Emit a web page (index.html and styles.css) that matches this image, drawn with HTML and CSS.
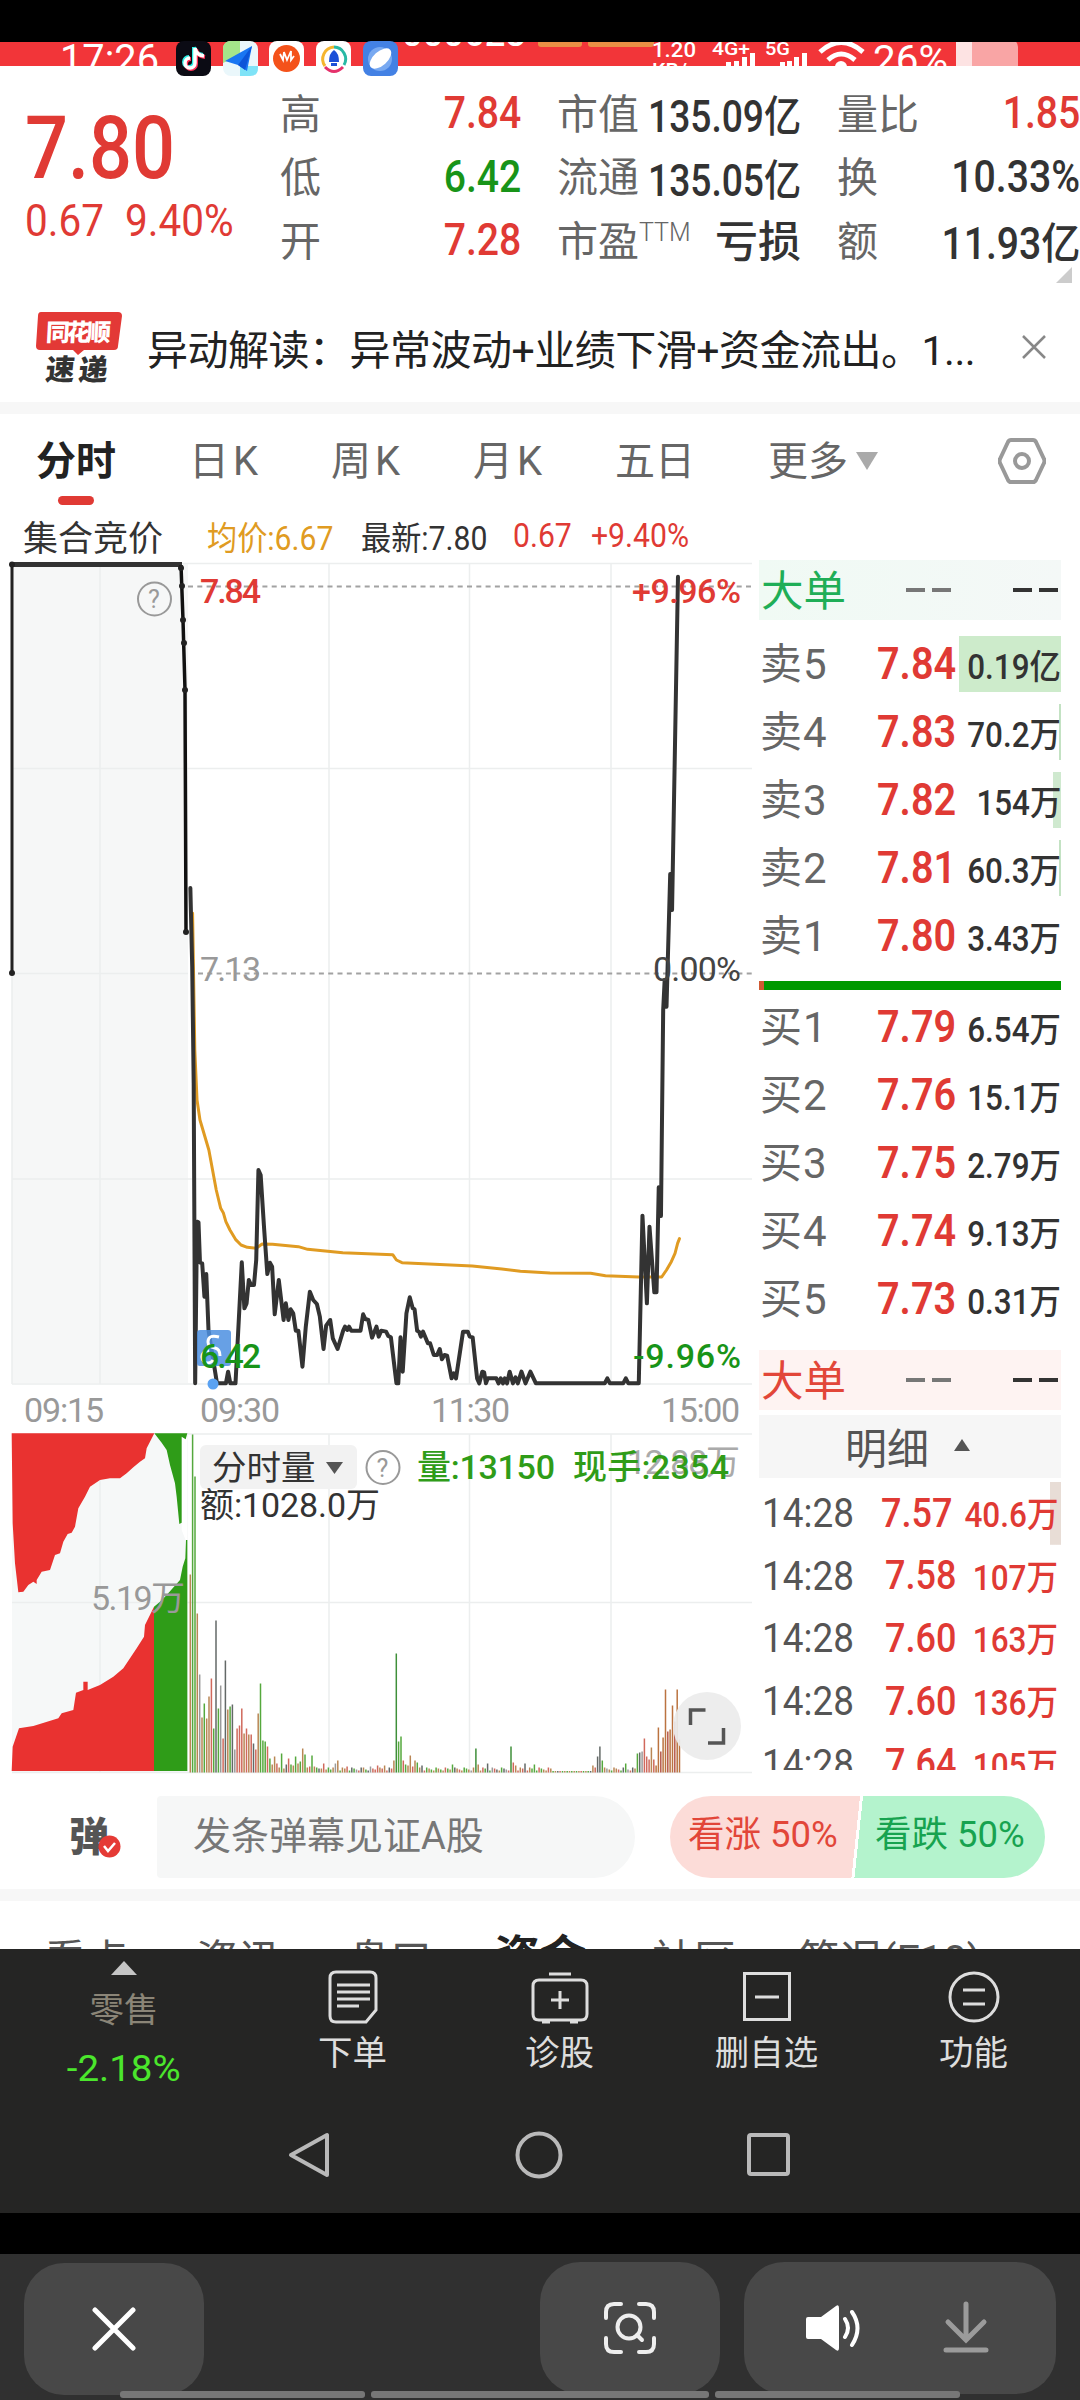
FILE: index.html
```
<!DOCTYPE html>
<html lang="zh-CN">
<head>
  <meta charset="UTF-8">
  <meta name="viewport" content="width=device-width, initial-scale=1.0">
  <title>分时</title>
  <link rel="stylesheet" href="styles.css">
</head>
<body>
  <div class="status">
    <svg width="1080" height="36" viewBox="0 41 1080 36">
      <rect x="0" y="42" width="1080" height="24" fill="#f23539"/>
      <g clip-path="url(#barClip)" fill="#fff" font-size="40">
        <text x="60" y="73" textLength="99" lengthAdjust="spacingAndGlyphs">17:26</text>
        <text x="402" y="46" font-size="36" font-weight="500" textLength="124" lengthAdjust="spacingAndGlyphs">000628</text>
        <rect x="538" y="38" width="44" height="9" rx="3" fill="#e98f45"/>
        <rect x="588" y="38" width="66" height="9" rx="3" fill="#e98f45"/>
        <text x="652" y="57" font-size="21" font-weight="500" textLength="44" lengthAdjust="spacingAndGlyphs">1.20</text>
        <text x="652" y="78" font-size="21" font-weight="500" textLength="46" lengthAdjust="spacingAndGlyphs">KB/s</text>
        <text x="712" y="55" font-size="19" font-weight="500" textLength="38" lengthAdjust="spacingAndGlyphs">4G+</text>
        <text x="765" y="55" font-size="19" font-weight="500" textLength="25" lengthAdjust="spacingAndGlyphs">5G</text>
        <path d="M726 66v-4h5v4zM734 66v-5h5v5zM742 66v-9h5v9zM750 66v-13h5v13zM780 66v-4h5v4zM787 66v-5h5v5zM794 66v-9h5v9zM802 66v-13h5v13z"/>
        <g fill="none" stroke="#fff" stroke-width="5">
          <path d="M820 52q21 -19 43 0"/>
          <path d="M828 60q13 -12 27 0"/>
        </g>
        <circle cx="841" cy="67" r="6"/>
        <text x="873" y="73" font-size="38" textLength="75" lengthAdjust="spacingAndGlyphs">26%</text>
        <rect x="956" y="39" width="62" height="34" rx="8" fill="#f9a5a5"/>
        <path d="M956 39h16v34h-16z" fill="#fde3e3"/>
      </g>
      <clipPath id="barClip"><rect x="0" y="42" width="1080" height="24"/></clipPath>
      <rect x="176" y="41" width="35" height="35" rx="8" fill="#0b0b14"/>
      <path d="M195 48v15a5 5 0 1 1-5-5M195 48q1 7 9 8" fill="none" stroke="#2ff0e8" stroke-width="4" transform="translate(-1 -1)"/>
      <path d="M195 48v15a5 5 0 1 1-5-5M195 48q1 7 9 8" fill="none" stroke="#fe3258" stroke-width="4" transform="translate(1 1)"/>
      <path d="M195 48v15a5 5 0 1 1-5-5M195 48q1 7 9 8" fill="none" stroke="#fff" stroke-width="3.500"/>
      <rect x="223" y="41" width="35" height="35" rx="8" fill="#eaf7fb"/>
      <path d="M223 49q0-8 8-8h9v14l-17 8z" fill="#a5e58a"/>
      <path d="M240 76v-10h18v2q0 8-8 8z" fill="#7fe3f7"/>
      <path d="M225 61l27-15-5 25-9-6z" fill="#1976f2"/>
      <path d="M238 65l14-19-7 24z" fill="#0c55d8"/>
      <rect x="269" y="41" width="35" height="35" rx="8" fill="#fff"/>
      <circle cx="286.500" cy="58.500" r="13.500" fill="#f4521a"/>
      <path d="M280 54l3 6 1-8 3 8 4-9 0 9 3-4" fill="none" stroke="#fff" stroke-width="1.800"/>
      <rect x="316" y="41" width="35" height="35" rx="8" fill="#fff"/>
      <g fill="none" stroke-width="3">
        <path d="M334 47a12 12 0 0 0-9 19" stroke="#f5b52e"/>
        <path d="M334 47a12 12 0 0 1 10 18" stroke="#28b9a5"/>
        <path d="M325 67q9 9 18 0" stroke="#e5316b"/>
      </g>
      <path d="M334 50q5 3 5 12h-10q0-9 5-12zM331 63h6v3h-6z" fill="#1c50d8"/>
      <rect x="363" y="41" width="35" height="35" rx="8" fill="#4381e4"/>
      <circle cx="380" cy="59" r="12" fill="#78a9f1"/>
      <ellipse cx="380.500" cy="58.500" rx="13" ry="7" fill="#fff" transform="rotate(-42 380.500 58.500)"/>
    </svg>
  </div>

  <div class="quote">
    <div class="price">
      <div class="last num">7.80</div>
      <div class="change"><span class="num">0.67</span><span class="num">9.40%</span></div>
    </div>
    <div class="stats">
      <div class="stat"><span>高</span><b class="num red">7.84</b></div>
      <div class="stat"><span>市值</span><b class="num cap">135.09亿</b></div>
      <div class="stat"><span>量比</span><b class="num red">1.85</b></div>
      <div class="stat"><span>低</span><b class="num green">6.42</b></div>
      <div class="stat"><span>流通</span><b class="num cap">135.05亿</b></div>
      <div class="stat"><span>换</span><b class="num">10.33%</b></div>
      <div class="stat"><span>开</span><b class="num red">7.28</b></div>
      <div class="stat"><span>市盈<sup>TTM</sup></span><b class="loss">亏损</b></div>
      <div class="stat"><span>额</span><b class="num">11.93亿</b></div>
    </div>
    <i class="corner"></i>
  </div>

  <div class="news">
    <svg class="news-logo" width="86" height="72" viewBox="0 0 86 72">
      <path d="M5 0h77q4 0 4 4l-4 30q0 4-4 4H48l-6 5-5-5H4q-4 0-4-4L2 4q0-4 3-4z" fill="#e33936"/>
      <text x="11" y="29" font-size="24" font-weight="900" fill="#fff" textLength="65" transform="skewX(-3)">同花顺</text>
      <text x="16" y="68" font-size="29" font-weight="900" fill="#333" textLength="62" transform="skewX(-6)">速递</text>
    </svg>
    <span class="news-text">异动解读：异常波动+业绩下滑+资金流出。1...</span>
    <svg width="24" height="24" viewBox="0 0 24 24"><path d="M1 1l22 22M23 1L1 23" stroke="#888" stroke-width="2.500"/></svg>
  </div>

  <div class="tabs">
    <span class="tab active">分时</span>
    <span class="tab">日<em>K</em></span>
    <span class="tab">周<em>K</em></span>
    <span class="tab">月<em>K</em></span>
    <span class="tab wide">五日</span>
    <span class="tab more">更多</span>
    <i class="caret"></i>
    <svg class="gear" width="48" height="46" viewBox="0 0 48 46"><path d="M13 2h22q2 0 3 2l8 17q1 2 0 4l-8 17q-1 2-3 2H13q-2 0-3-2L2 25q-1-2 0-4L10 4q1-2 3-2z" fill="none" stroke="#999" stroke-width="4"/><circle cx="24" cy="23" r="7" fill="none" stroke="#999" stroke-width="4"/></svg>
  </div>

  <div class="legend">
    <span class="legend-title">集合竞价</span>
    <span class="num avg">均价:6.67</span>
    <span class="num now">最新:7.80</span>
    <span class="num red diff">0.67</span>
    <span class="num red">+9.40%</span>
  </div>

  <div class="market">
    <svg class="chart" width="752" height="1214" viewBox="0 560 752 1214">
      <rect x="12" y="563" width="176" height="820" fill="#f6f7f7"/>
      <rect x="12" y="1434" width="176" height="338" fill="#f6f8f8"/>
      <g stroke="#eceeee" stroke-width="1.500">
        <path d="M12 563.500H752M12 768.500H752M12 973.500H188M12 1179H752M12 1384H752M12 1434H752M12 1602.500H752M12 1772.500H752"/>
        <path d="M100 563V1384M329 563V1384M469.500 563V1384M611 563V1384M100 1434V1772M329 1434V1772M469.500 1434V1772M611 1434V1772M12 974V1384"/>
      </g>
      <path d="M188 586.500H752M198 973.500H752" stroke="#a2a2a2" stroke-width="2" stroke-dasharray="5 4.300"/>

      <!-- call auction -->
      <path d="M12 973V565" stroke="#222" stroke-width="3"/>
      <path d="M12 564.500H182" stroke="#333" stroke-width="5"/>
      <path d="M181 565L183 620L185 690L186 932" fill="none" stroke="#111" stroke-width="3.500"/>
      <g fill="#222"><circle cx="12" cy="973" r="3"/><circle cx="12" cy="564.500" r="3"/><circle cx="181" cy="568" r="3"/><circle cx="182" cy="586" r="3"/><circle cx="183" cy="620" r="3"/><circle cx="184" cy="643" r="3"/><circle cx="185" cy="690" r="3"/><circle cx="186" cy="932" r="3"/></g>
      <circle cx="154.500" cy="599" r="16.500" fill="none" stroke="#999" stroke-width="2"/>
      <text x="148" y="608" font-size="25" fill="#999">?</text>

      <!-- average and price -->
      <g fill="none" stroke-linejoin="round" stroke-linecap="round" transform="translate(180 1100) scale(.36997 .33333)">
        <polyline class="line" stroke="#e09b22" points="34,-560 40,-150 46,0 54,60 78,150 98,270 110,325 117,338 124,365 135,390 150,418 165,435 182,442 206,445 222,432 250,433 320,440 345,448 440,458 575,464 585,480 600,488 790,498 870,507 920,514 1000,519 1110,520 1150,527 1240,531 1302,531 1315,510 1328,485 1338,460 1345,430 1350,416"/>
        <polyline class="line price-line" stroke="#333" points="28,-636 33,-400 37,-50 41,850 46,365 50,367 54,487 60,490 66,590 71,522 77,690 84,740 100,850 124,850 130,815 136,850 150,850 167,487 174,625 180,610 186,540 192,555 200,555 206,480 212,210 218,225 227,380 236,522 243,488 249,500 256,643 267,540 280,660 286,610 293,660 299,628 306,640 313,692 320,692 331,800 340,680 351,575 360,600 370,612 378,650 388,747 395,677 406,660 413,715 426,747 441,692 446,680 452,690 457,680 463,692 488,692 495,643 501,657 509,660 519,713 531,680 537,710 544,692 557,695 563,708 570,712 585,850 590,850 596,712 602,815 612,640 621,592 629,625 634,628 641,692 646,695 651,710 657,695 670,730 676,730 686,765 695,765 702,747 708,778 715,765 722,767 734,835 740,820 746,835 765,695 778,695 783,710 791,712 803,835 809,850 817,815 822,817 827,850 832,835 855,835 861,850 867,835 873,850 878,835 884,850 891,815 900,850 907,832 913,850 923,815 934,850 947,815 962,850 1148,850 1155,835 1162,850 1198,850 1205,835 1212,850 1240,850 1250,347 1262,610 1269,380 1282,577 1288,577 1294,262 1300,348 1306,-270 1310,-360 1315,-280 1325,-678 1330,-570 1346,-1570"/>
      </g>

      <rect x="197" y="1330" width="34" height="36" rx="3" fill="#4c8fe0" opacity=".85"/>
      <path d="M219 1337q-11-3-11 5 0 5 7 6 5 1 5 8M209 1351a6 6 0 1 0 4 9" fill="none" stroke="#fff" stroke-width="3"/>
      <circle cx="213" cy="1384" r="5.500" fill="#5aa2f2"/>

      <g class="axis" font-size="34" font-weight="500">
        <text x="200" y="603" textLength="61" fill="#e03a34">7.84</text>
        <text x="632" y="603" textLength="109" fill="#e03a34">+9.96%</text>
        <text x="200" y="981" textLength="61" fill="#999" font-weight="400">7.13</text>
        <text x="653" y="981" textLength="88" fill="#444" font-weight="400">0.00%</text>
        <text x="200" y="1368" textLength="61" fill="#189418">6.42</text>
        <text x="633" y="1368" textLength="108" fill="#189418">-9.96%</text>
      </g>
      <g class="axis" font-size="34" fill="#999">
        <text x="24" y="1422" textLength="80">09:15</text>
        <text x="200" y="1422" textLength="80">09:30</text>
        <text x="431" y="1422" textLength="79">11:30</text>
        <text x="661" y="1422" textLength="79">15:00</text>
      </g>

      <!-- auction volume -->
      <g transform="translate(0 1390) scale(.33333)">
        <path fill="#e93230" d="M35 130H463L440 175L435 205L420 215L400 232L380 250L360 265L330 265L300 270L270 290L255 320L235 355L225 410L215 428L203 432L190 455L180 490L165 495L150 540L125 545L110 570V582L100 575L85 585L70 605L55 607L45 520L38 400Z"/>
        <path fill="#fff" d="M545 140H562V450H557L545 420Z"/>
        <path fill="#2f9c18" d="M463 130H562L557 148L545 140V398L538 402L530 320L525 280L510 225L500 180L485 158Z"/>
        <path fill="#e93230" d="M35 1143L38 1070L57 1015L100 1008L175 985L185 970L220 960L228 908L250 900V875H263V900L300 885L340 860L370 835L410 775L432 740L435 705L462 650V1143Z"/>
        <path fill="#2f9c18" d="M462 650L480 635L500 615L540 570L548 530L556 505L558 450H562V1143H462Z"/>
      </g>
      <text class="axis" x="91" y="1610" font-size="34" fill="#999" textLength="94">5.19万</text>

      <g id="bars"></g>

      <rect x="200" y="1445" width="157" height="44" rx="6" fill="#f2f2f2"/>
      <text x="212" y="1480" font-size="34.500" fill="#333">分时量</text>
      <path d="M326 1462h17l-8.500 12z" fill="#555"/>
      <circle cx="383" cy="1467.500" r="16.500" fill="none" stroke="#999" stroke-width="2"/>
      <text x="376.500" y="1477" font-size="25" fill="#999">?</text>
      <g class="axis" font-size="34">
        <text x="627" y="1474" fill="#aaa" textLength="113">12.88万</text>
        <text x="417" y="1479" fill="#2f9c18" font-weight="500" textLength="138">量:13150</text>
        <text x="573" y="1479" fill="#2f9c18" font-weight="500" textLength="156">现手:2354</text>
        <text x="200" y="1517" fill="#333" textLength="180">额:1028.0万</text>
      </g>
      <circle cx="707" cy="1726" r="34" fill="#ebebeb" opacity=".92"/>
      <path d="M690.500 1725v-15h15M708 1743h15.500v-15" fill="none" stroke="#555" stroke-width="3.500"/>
    </svg>

    <div class="book">
      <div class="big sell"><span>大单</span><i></i><i class="dark"></i></div>
      <div class="levels">
        <div class="level"><span>卖<em>5</em></span><b class="num">7.84</b><u class="full"><s class="num">0.19亿</s></u></div>
        <div class="level"><span>卖<em>4</em></span><b class="num">7.83</b><u class="thin"><s class="num">70.2万</s></u></div>
        <div class="level"><span>卖<em>3</em></span><b class="num">7.82</b><u class="part"><s class="num">154万</s></u></div>
        <div class="level"><span>卖<em>2</em></span><b class="num">7.81</b><u class="thin"><s class="num">60.3万</s></u></div>
        <div class="level"><span>卖<em>1</em></span><b class="num">7.80</b><u><s class="num">3.43万</s></u></div>
      </div>
      <div class="ratio"></div>
      <div class="levels buy-levels">
        <div class="level"><span>买<em>1</em></span><b class="num">7.79</b><u><s class="num">6.54万</s></u></div>
        <div class="level"><span>买<em>2</em></span><b class="num">7.76</b><u><s class="num">15.1万</s></u></div>
        <div class="level"><span>买<em>3</em></span><b class="num">7.75</b><u><s class="num">2.79万</s></u></div>
        <div class="level"><span>买<em>4</em></span><b class="num">7.74</b><u><s class="num">9.13万</s></u></div>
        <div class="level"><span>买<em>5</em></span><b class="num">7.73</b><u><s class="num">0.31万</s></u></div>
      </div>
      <div class="big buy"><span>大单</span><i></i><i class="dark"></i></div>
      <div class="detail">明细<i></i></div>
      <div class="ticks">
        <div class="tick mark"><span class="num">14:28</span><b class="num">7.57</b><s class="num">40.6万</s></div>
        <div class="tick"><span class="num">14:28</span><b class="num">7.58</b><s class="num">107万</s></div>
        <div class="tick"><span class="num">14:28</span><b class="num">7.60</b><s class="num">163万</s></div>
        <div class="tick"><span class="num">14:28</span><b class="num">7.60</b><s class="num">136万</s></div>
        <div class="tick"><span class="num">14:28</span><b class="num">7.64</b><s class="num">105万</s></div>
      </div>
    </div>
  </div>

  <div class="danmu">
    <div class="danmu-icon">弹
      <svg width="23" height="23" viewBox="0 0 23 23"><circle cx="11.500" cy="11.500" r="11" fill="#e53a35"/><path d="M6 11l4 5 7-8" fill="none" stroke="#fff" stroke-width="2.500"/></svg>
    </div>
    <div class="danmu-input">发条弹幕见证A股</div>
    <div class="vote"><span class="up">看涨 50%</span><span class="down">看跌 50%</span></div>
  </div>

  <div class="sections">
    <span>看点</span><span>资讯</span><span>盘口</span><span class="on">资金</span><span>社区</span><span>简况(F10)</span>
  </div>

  <div class="actions">
    <div class="action index"><i></i><span>零售</span><b class="num">-2.18%</b></div>
    <div class="action">
      <svg width="50" height="56" viewBox="0 0 50 56"><path d="M8 3h34q6 0 6 6v32L38 53H8q-6 0-6-6V9q0-6 6-6zM9 16h33M9 23h33M9 30h33M9 37h22"/></svg>
      <span>下单</span>
    </div>
    <div class="action">
      <svg width="58" height="56" viewBox="0 0 58 56"><path d="M8 11h42q6 0 6 6v28q0 6-6 6H8q-6 0-6-6V17q0-6 6-6zM18 5h22M29 22v18M20 31h18M11 53h8M39 53h8"/></svg>
      <span>诊股</span>
    </div>
    <div class="action">
      <svg width="50" height="56" viewBox="0 0 50 56"><path d="M2.500 4.500h45v46h-45zM13 28h24"/></svg>
      <span>删自选</span>
    </div>
    <div class="action">
      <svg width="52" height="56" viewBox="0 0 52 56"><circle cx="26" cy="28" r="24"/><path d="M15 21h22M15 35h22"/></svg>
      <span>功能</span>
    </div>
  </div>
  <div class="nav">
    <svg width="44" height="48" viewBox="0 0 44 48"><path d="M40 4v40L4 24z"/></svg>
    <svg width="48" height="48" viewBox="0 0 48 48"><circle cx="24" cy="24" r="21.500"/></svg>
    <svg width="44" height="48" viewBox="0 0 44 48"><rect x="2" y="4" width="39" height="39" rx="2"/></svg>
  </div>

  <div class="viewer">
    <button class="vbtn"><svg width="44" height="44" viewBox="0 0 44 44"><path d="M3 3l38 38M41 3L3 41" stroke="#fff" stroke-width="5" stroke-linecap="round"/></svg></button>
    <button class="vbtn lens"><svg width="54" height="54" viewBox="0 0 54 54" fill="none" stroke="#eee" stroke-width="4" stroke-linecap="round"><path d="M3 17v-6q0-8 8-8h7M36 3h7q8 0 8 8v6M51 37v6q0 8-8 8h-7M18 51h-7q-8 0-8-8v-6"/><circle cx="26" cy="26" r="11.500"/><path d="M34 34l5 5"/></svg></button>
    <button class="vbtn pair">
      <svg width="58" height="48" viewBox="0 0 58 48"><path d="M3 13h13L31 2q3-2 3 2v40q0 4-3 2L16 35H3q-2 0-2-2V15q0-2 2-2z" fill="#fff"/><path d="M40 15q6 9 0 18M47 8q11 16 0 33" fill="none" stroke="#fff" stroke-width="4" stroke-linecap="round"/></svg>
      <svg width="48" height="54" viewBox="0 0 48 54" fill="none" stroke="#9b9b9b" stroke-width="5" stroke-linecap="round"><path d="M24 3v34M6 21l18 18 18-18M4 49h40"/></svg>
    </button>
    <div class="progress"><i></i><i class="mid"></i><i></i></div>
  </div>

  <script>
    const base = 1772.5;
    const heights = [198,338,296,159,98,55,69,54,76,94,44,152,64,87,34,112,63,66,68,23,44,47,64,39,44,38,38,29,23,59,89,32,31,26,14,8,16,9,5,19,4,8,14,8,7,16,9,11,24,18,5,6,17,6,5,4,4,9,3,5,3,5,9,12];
    const spikes = {67:6,74:5,77:6,80:7,83:7,86:4,87:12,88:119,89:31,90:36,91:12,92:8,93:7,94:17,95:6,96:12,97:10,98:5,99:7,112:8,113:5,122:24,123:8,127:9,137:26,138:10,139:7,143:9,147:8,172:7,174:16,175:26,176:12,186:9,191:19,192:20,193:21,194:34,195:16,196:13,197:25,198:13,199:7,200:45,201:21,202:35,203:83,204:41,205:43,206:67,207:51,208:83,209:33};
    const colors = { g: '#55a83d', o: '#b98654', r: '#d0695c', k: '#636967', x: '#9a9a9a' };
    const pattern = 'oggoxogoorgkgxrkogkxrrrororkrogggrgoorogokrgogogogorgogkor';
    let out = '';
    for (let i = 0; i < 210; i++) {
      let h = heights[i] || spikes[i] || 2 + (i * 7 % 4);
      if (i > 154 && i < 172) h = 1.5;
      let c = colors[pattern[i % pattern.length]];
      if (i === 88 || i === 122 || i === 137) c = '#3f8f3a';
      if (i === 175 || i === 174) c = colors.k;
      if (i > 198) c = i % 3 ? '#bb7340' : '#b6594a';
      const x = (190.3 + i * 2.3407).toFixed(1);
      out += `<path d="M${x} ${base}V${base - h}" stroke="${c}" stroke-width="1.5"/>`;
    }
    document.getElementById('bars').innerHTML = out;
  </script>
</body>
</html>
```

FILE: styles.css
```
* {
  box-sizing: border-box;
}
body {
  margin: 0;
  width: 1080px;
  height: 2400px;
  overflow: hidden;
  background: #fff;
  color: #333;
  font-family: Roboto, "Noto Sans CJK SC", sans-serif;
}
b, s, u, i, em {
  font-style: normal;
  font-weight: 400;
  text-decoration: none;
}
.num {
  display: inline-block;
  white-space: nowrap;
  transform: scaleX(.9);
  transform-origin: left center;
}
.red { color: #e03a34; }
.green { color: #189418; }

/* status bar */
.status {
  height: 77px;
  padding-top: 41px;
  background: linear-gradient(#000 42px, #fff 42px);
}
.status svg {
  display: block;
}

/* quote */
.quote {
  position: relative;
  display: flex;
  height: 215px;
}
.price {
  width: 281px;
  padding-left: 25px;
  color: #e03a34;
}
.last {
  margin-top: 21px;
  font-size: 88px;
  line-height: 100px;
  font-weight: 500;
  transform: scaleX(.86);
}
.change {
  display: flex;
  margin-top: -2px;
  font-size: 44px;
  line-height: 50px;
}
.change span {
  width: 100px;
  transform: scaleX(.92);
}
.stats {
  display: grid;
  grid-template-columns: 241px 244px 243px;
  grid-template-rows: repeat(3, 63.5px);
  column-gap: 36px;
  padding-top: 5px;
}
.stat {
  display: flex;
  justify-content: space-between;
  align-items: center;
  font-size: 41px;
  color: #666;
  white-space: nowrap;
}
.stat > span {
  padding-bottom: 6px;
}
.stat b {
  color: #333;
  font-size: 43.5px;
  font-weight: 500;
  transform-origin: right center;
}
.stat .num {
  margin-left: -30px;
}
.stat .cap {
  transform: scaleX(.855);
}
.stat b.red { color: #e03a34; }
.stat b.green { color: #189418; }
.stat .loss {
  padding-bottom: 5px;
  font-size: 43px;
}
.stat sup {
  font-size: 25px;
  font-weight: 300;
  line-height: 0;
}
.corner {
  position: absolute;
  right: 8px;
  top: 190px;
  border: solid transparent;
  border-width: 8px;
  border-right-color: #ccc;
  border-bottom-color: #ccc;
}

/* news */
.news {
  display: flex;
  align-items: center;
  height: 122px;
  padding: 0 34px 0 36px;
  border-bottom: 12px solid #f7f7f7;
}
.news-logo {
  margin-top: 1px;
}
.news-text {
  flex: 1;
  margin-left: 25px;
  font-size: 41px;
  letter-spacing: -.5px;
  color: #222;
  white-space: nowrap;
}

/* tabs */
.tabs {
  display: flex;
  align-items: center;
  height: 93px;
  padding-left: 36px;
  font-size: 40px;
  color: #666;
  white-space: nowrap;
}
.tab {
  width: 143px;
  margin: -6px 0 0 -1px;
}
.tab em {
  margin-left: 4px;
}
.tab.active {
  position: relative;
  width: 154px;
  margin-left: 0;
  color: #222;
  font-weight: 700;
}
.tab.active::after {
  content: "";
  position: absolute;
  left: 22px;
  bottom: -18px;
  width: 36px;
  height: 9px;
  border-radius: 5px;
  background: #e03a34;
}
.tab.wide {
  width: 154px;
}
.tab.more {
  width: 88px;
}
.caret {
  border: solid transparent;
  border-width: 18px 11px 0;
  border-top-color: #aaa;
}
.gear {
  margin-left: 120px;
}

/* legend */
.legend {
  display: flex;
  align-items: center;
  height: 53px;
  padding: 3px 0 0 23px;
  font-size: 33.5px;
  white-space: nowrap;
}
.legend-title {
  width: 184px;
  font-size: 35px;
}
.legend .avg {
  width: 154px;
  color: #e09b22;
}
.legend .now {
  width: 152px;
}
.legend .diff {
  width: 78px;
}

/* chart and order book */
.market {
  display: flex;
  height: 1214px;
}
.chart text {
  white-space: pre;
}
.line {
  vector-effect: non-scaling-stroke;
  stroke-width: 3;
}
.price-line {
  stroke-width: 4;
}
.book {
  width: 302px;
  margin-left: 7px;
  height: 1210px;
  overflow: hidden;
}
.big {
  display: flex;
  align-items: center;
  height: 60px;
  padding-left: 2px;
  font-size: 42.5px;
}
.big span {
  width: 145px;
  padding-bottom: 6px;
}
.big i {
  width: 45px;
  height: 4px;
  margin-right: 62px;
  background: linear-gradient(90deg, #777 19px, transparent 19px, transparent 26px, #777 26px);
}
.big i.dark {
  margin-right: 0;
  background: linear-gradient(90deg, #333 19px, transparent 19px, transparent 26px, #333 26px);
}
.sell {
  color: #1fae57;
  background: linear-gradient(90deg, #f0faf4, #f4f8f7);
}
.buy {
  color: #e24639;
  background: #fef3f2;
}
.levels {
  height: 361px;
  padding-top: 10px;
}
.level {
  display: flex;
  align-items: center;
  height: 68px;
  padding-left: 1px;
}
.level span {
  width: 117px;
  padding-bottom: 7px;
  font-size: 42px;
  color: #666;
}
.level em {
  display: inline-block;
  margin-left: 1px;
}
.level b {
  width: 82px;
  font-size: 44px;
  font-weight: 600;
  color: #e03a34;
}
.level u {
  display: flex;
  justify-content: flex-end;
  align-items: center;
  width: 102px;
  height: 56px;
  font-size: 34.5px;
}
.level s {
  font-weight: 500;
  transform: scaleX(.91);
  transform-origin: right center;
}
.level .full { background: #cdebcb; }
.level .part { background: linear-gradient(#cfe9cf, #cfe9cf) right / 8px 100% no-repeat; }
.level .thin { background: linear-gradient(#c3e2c3, #c3e2c3) right / 2px 100% no-repeat; }
.ratio {
  height: 9px;
  background: linear-gradient(90deg, #d05a33 5px, #009900 5px);
}
.buy-levels {
  height: 360px;
  padding-top: 3px;
}
.detail {
  display: flex;
  align-items: center;
  height: 63px;
  margin-top: 5px;
  padding: 0 0 3px 86px;
  font-size: 42px;
  color: #555;
  background: #f6f6f6;
}
.detail i {
  margin-left: 25px;
  border: solid transparent;
  border-width: 0 8px 12px;
  border-bottom-color: #555;
}
.ticks {
  padding-top: 4px;
}
.tick {
  display: flex;
  align-items: center;
  height: 62.6px;
  padding-left: 3px;
  font-size: 41px;
  color: #e03a34;
}
.tick span {
  width: 123px;
  color: #555;
}
.tick b {
  width: 73px;
  font-size: 40px;
  font-weight: 500;
}
.tick s {
  flex: 1;
  display: flex;
  justify-content: flex-end;
  font-size: 35px;
  font-weight: 500;
  transform: scaleX(.9);
  transform-origin: right center;
  margin: -3px 3px 0 0;
}
.mark {
  background: linear-gradient(#e8ddd6, #e8ddd6) right / 11px 100% no-repeat;
}

/* comments */
.danmu {
  display: flex;
  align-items: center;
  height: 127px;
  padding-top: 11px;
  border-bottom: 12px solid #f7f7f7;
}
.danmu-icon {
  position: relative;
  width: 157px;
  padding: 0 0 6px 69px;
  font-size: 40px;
  font-weight: 900;
  color: #555;
}
.danmu-icon svg {
  position: absolute;
  left: 98px;
  top: 30px;
}
.danmu-input {
  width: 478px;
  height: 82px;
  padding-left: 36px;
  border-radius: 4px 41px 41px 4px;
  background: #f6f7f7;
  color: #777;
  font-size: 38px;
  line-height: 80px;
}
.vote {
  display: flex;
  width: 375px;
  height: 82px;
  margin-left: 35px;
  border-radius: 41px;
  overflow: hidden;
  font-size: 36.5px;
  line-height: 78px;
  background: linear-gradient(96deg, #fcdcd8 189px, #fff 189px, #fff 192px, #b4f3cd 192px);
}
.vote span {
  width: 187px;
  padding-left: 18px;
  color: #e24639;
  white-space: nowrap;
}
.vote .down {
  color: #17a350;
}
.sections {
  display: flex;
  height: 48px;
  overflow: hidden;
  padding: 34px 0 0 44px;
  font-size: 42px;
  line-height: 52px;
  color: #555;
  white-space: nowrap;
}
.sections span {
  width: 152px;
}
.sections span:nth-child(3) {
  width: 146px;
}
.sections .on {
  width: 158px;
  margin-top: -4px;
  font-size: 46px;
  font-weight: 700;
  color: #222;
}
.sections span:nth-child(5) {
  width: 146px;
}

/* bottom bars */
.actions {
  display: flex;
  height: 158px;
  padding-left: 21px;
  background: #252524;
}
.action {
  display: flex;
  flex-direction: column;
  align-items: center;
  width: 207px;
  padding-top: 20px;
  color: #ddd;
  font-size: 34.5px;
  line-height: 56px;
}
.action.index {
  width: 228px;
  padding: 12px 22px 0 0;
  line-height: 50px;
}
.action svg {
  fill: none;
  stroke: #ddd;
  stroke-width: 3;
}
.index i {
  border: solid transparent;
  border-width: 0 13px 14px;
  border-bottom-color: #c5c5c5;
}
.index span {
  margin-top: 10px;
  color: #8b8577;
}
.index b {
  margin-top: 9px;
  color: #4be62c;
  font-size: 37px;
  transform: scaleX(1.04);
  transform-origin: center;
}
.nav {
  display: flex;
  height: 106px;
  padding: 24px 0 0 287px;
  background: #252524;
}
.nav svg {
  fill: none;
  stroke: #b9b9b9;
  stroke-width: 4;
  stroke-linejoin: round;
  margin-right: 184px;
}
.viewer {
  position: relative;
  display: flex;
  height: 188px;
  border-top: 41px solid #000;
  padding: 9px 24px 0;
  background: #303030;
}
.vbtn {
  display: flex;
  align-items: center;
  justify-content: center;
  width: 180px;
  height: 132px;
  padding: 0;
  border: 0;
  border-radius: 40px;
  background: #484848;
}
.lens {
  margin: -1px 24px 0 336px;
}
.pair {
  width: 312px;
  margin-top: -1px;
  gap: 79px;
  padding-right: 6px;
}
.progress {
  position: absolute;
  left: 120px;
  bottom: 3px;
  display: flex;
  gap: 6px;
}
.progress i {
  width: 245px;
  height: 7px;
  border-radius: 3px;
  background: #777;
}
.progress .mid {
  width: 338px;
}
```
